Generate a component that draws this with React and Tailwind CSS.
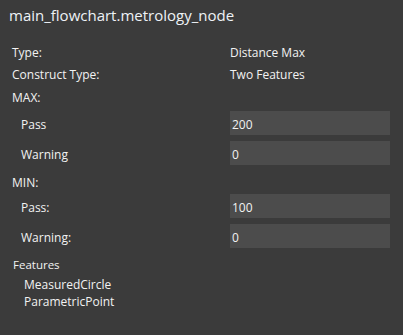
export default function App() {
  return (
    <div className="w-[403px] h-[335px] bg-[#3b3b3b] text-[#f2f2f2] font-['Open_Sans',sans-serif] text-[12px] overflow-hidden flex flex-col">
      <div className="h-[40px] pl-[9px] pt-[5px] text-[15px] leading-[20px] text-[#eef2f6]">main_flowchart.metrology_node</div>
      <div className="h-[22px] pt-[3px] flex items-center">
        <div className="w-[230px] pl-[12px]">Type:</div>
        <div>Distance Max</div>
      </div>
      <div className="h-[23px] pt-[3px] flex items-center">
        <div className="w-[230px] pl-[12px]">Construct Type:</div>
        <div>Two Features</div>
      </div>
      <div className="h-[23px] pt-[3px] flex items-center pl-[12px]">MAX:</div>
      <div className="mt-[3px] h-[24px] flex items-center">
        <div className="w-[230px] pl-[21px] pt-[3px]">Pass</div>
        <div className="w-[160px] h-[24px] bg-[#4c4c4c] flex items-center pl-[2px] pt-[3px]">200</div>
      </div>
      <div className="mt-[6px] h-[24px] flex items-center">
        <div className="w-[230px] pl-[21px] pt-[3px]">Warning</div>
        <div className="w-[160px] h-[24px] bg-[#4c4c4c] flex items-center pl-[2px] pt-[3px]">0</div>
      </div>
      <div className="mt-[5px] h-[22px] pt-[3px] flex items-center pl-[12px]">MIN:</div>
      <div className="mt-[2px] h-[24px] flex items-center">
        <div className="w-[230px] pl-[21px] pt-[3px]">Pass:</div>
        <div className="w-[160px] h-[24px] bg-[#4c4c4c] flex items-center pl-[2px] pt-[3px]">100</div>
      </div>
      <div className="mt-[6px] h-[24px] flex items-center">
        <div className="w-[230px] pl-[21px] pt-[3px]">Warning:</div>
        <div className="w-[160px] h-[24px] bg-[#4c4c4c] flex items-center pl-[2px] pt-[3px]">0</div>
      </div>
      <div className="mt-[7px] h-[17px] pt-[3px] flex items-center pl-[13px] text-[11.5px]">Features</div>
      <div className="mt-[3px] h-[17px] pt-[3px] flex items-center pl-[24px]">MeasuredCircle</div>
      <div className="h-[17px] pt-[3px] flex items-center pl-[24px]">ParametricPoint</div>
    </div>
  );
}
